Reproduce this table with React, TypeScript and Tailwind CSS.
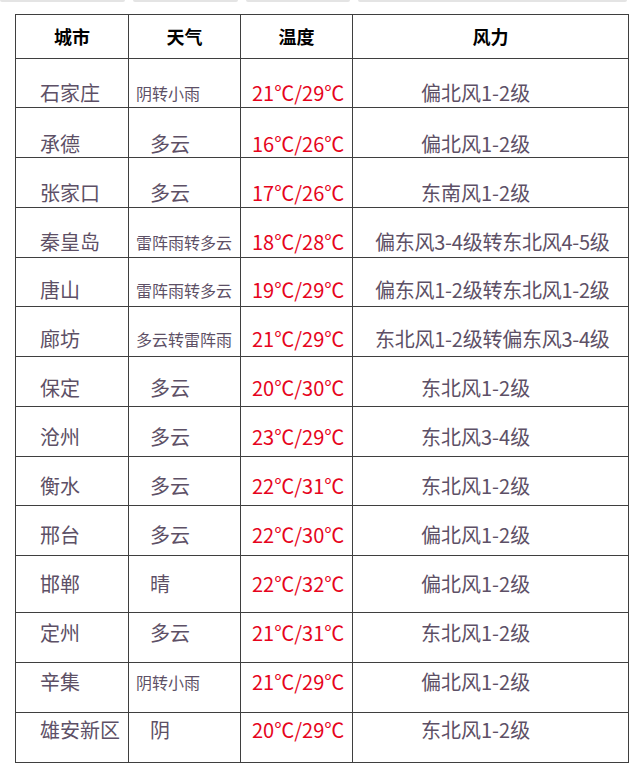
const rows = [
  { city: '石家庄', weather: '阴转小雨', small: true, temp: '21℃/29℃', wind: '偏北风1-2级', long: false, h: 'h-[49px]', pt: 'pt-[24px]' },
  { city: '承德', weather: '多云', small: false, temp: '16℃/26℃', wind: '偏北风1-2级', long: false, h: 'h-[50px]', pt: 'pt-[26px]' },
  { city: '张家口', weather: '多云', small: false, temp: '17℃/26℃', wind: '东南风1-2级', long: false, h: 'h-[50px]', pt: 'pt-[25px]' },
  { city: '秦皇岛', weather: '雷阵雨转多云', small: true, temp: '18℃/28℃', wind: '偏东风3-4级转东北风4-5级', long: true, h: 'h-[50px]', pt: 'pt-[24px]' },
  { city: '唐山', weather: '雷阵雨转多云', small: true, temp: '19℃/29℃', wind: '偏东风1-2级转东北风1-2级', long: true, h: 'h-[49px]', pt: 'pt-[22px]' },
  { city: '廊坊', weather: '多云转雷阵雨', small: true, temp: '21℃/29℃', wind: '东北风1-2级转偏东风3-4级', long: true, h: 'h-[50px]', pt: 'pt-[22px]' },
  { city: '保定', weather: '多云', small: false, temp: '20℃/30℃', wind: '东北风1-2级', long: false, h: 'h-[50px]', pt: 'pt-[21px]' },
  { city: '沧州', weather: '多云', small: false, temp: '23℃/29℃', wind: '东北风3-4级', long: false, h: 'h-[50px]', pt: 'pt-[20px]' },
  { city: '衡水', weather: '多云', small: false, temp: '22℃/31℃', wind: '东北风1-2级', long: false, h: 'h-[49px]', pt: 'pt-[19px]' },
  { city: '邢台', weather: '多云', small: false, temp: '22℃/30℃', wind: '偏北风1-2级', long: false, h: 'h-[50px]', pt: 'pt-[19px]' },
  { city: '邯郸', weather: '晴', small: false, temp: '22℃/32℃', wind: '偏北风1-2级', long: false, h: 'h-[57px]', pt: 'pt-[18px]' },
  { city: '定州', weather: '多云', small: false, temp: '21℃/31℃', wind: '东北风1-2级', long: false, h: 'h-[50px]', pt: 'pt-[10px]' },
  { city: '辛集', weather: '阴转小雨', small: true, temp: '21℃/29℃', wind: '偏北风1-2级', long: false, h: 'h-[50px]', pt: 'pt-[9px]' },
  { city: '雄安新区', weather: '阴', small: false, temp: '20℃/29℃', wind: '东北风1-2级', long: false, h: 'h-[50px]', pt: 'pt-[7px]' },
];

const body = "font-['Noto_Sans_CJK_SC',sans-serif]";

export default function App() {
  return (
    <div className={`w-[641px] h-[783px] bg-white overflow-hidden ${body}`}>
      {/* leftover edge of the previous table */}
      <div className="flex h-[2px] gap-[8px]">
        <div className="w-[125px] bg-[#e4e4e4] rounded-b" />
        <div className="w-[105px] bg-[#e4e4e4] rounded-b" />
        <div className="w-[104px] bg-[#e4e4e4] rounded-b" />
        <div className="w-[269px] bg-[#e4e4e4] rounded-b" />
      </div>

      <div className="ml-[15px] mt-[12px] w-[614px] border-l border-t border-[#3f3f3f]">
        {/* header */}
        <div className="flex h-[44px] border-b border-[#3f3f3f] text-[18px] font-bold text-black font-['Liberation_Serif','Noto_Sans_CJK_SC',serif]">
          <div className="w-[113px] border-r border-[#3f3f3f] flex items-center justify-center pt-1">城市</div>
          <div className="w-[112px] border-r border-[#3f3f3f] flex items-center justify-center pt-1">天气</div>
          <div className="w-[112px] border-r border-[#3f3f3f] flex items-center justify-center pt-1">温度</div>
          <div className="w-[276px] border-r border-[#3f3f3f] flex items-center justify-center pt-1">风力</div>
        </div>

        {rows.map((r) => (
          <div key={r.city} className={`flex ${r.h} border-b border-[#3f3f3f] leading-5 text-[#5d5066]`}>
            <div className={`w-[113px] border-r border-[#3f3f3f] pl-6 text-[20px] whitespace-nowrap ${r.pt}`}>{r.city}</div>
            <div
              className={`w-[112px] border-r border-[#3f3f3f] whitespace-nowrap ${r.pt} ${
                r.small ? 'pl-[7px] text-[16px]' : 'pl-[21px] text-[20px]'
              }`}
            >
              {r.weather}
            </div>
            <div className={`w-[112px] border-r border-[#3f3f3f] pl-[11px] text-[20px] text-[#e6041c] whitespace-nowrap ${r.pt}`}>
              {r.temp}
            </div>
            <div
              className={`w-[276px] border-r border-[#3f3f3f] text-[20px] whitespace-nowrap ${r.pt} ${
                r.long ? 'pl-[22px] tracking-[-0.25px]' : 'pl-[68px]'
              }`}
            >
              {r.wind}
            </div>
          </div>
        ))}
      </div>
    </div>
  );
}
